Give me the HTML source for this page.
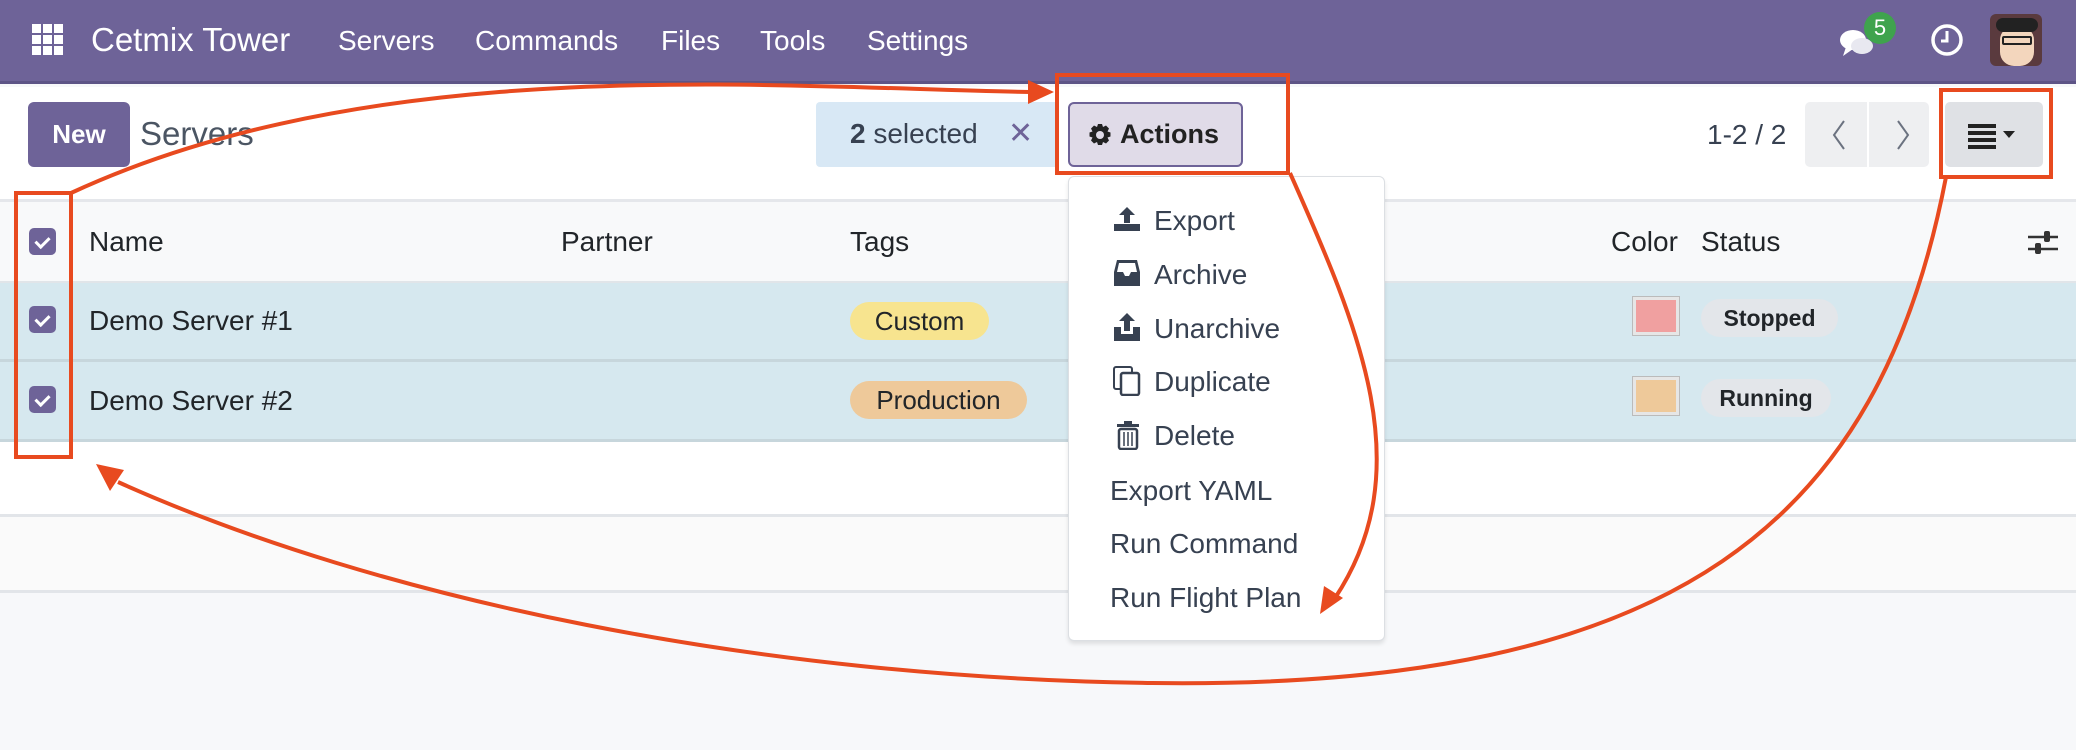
<!DOCTYPE html>
<html><head><meta charset="utf-8"><style>
*{box-sizing:border-box;margin:0;padding:0}
body{width:2076px;height:750px;overflow:hidden;background:#f7f8fa;font-family:"Liberation Sans",sans-serif;position:relative;color:#212529}
.abs{position:absolute}
.nav{left:0;top:0;width:2076px;height:84px;background:#6e6398;border-bottom:3px solid #5d5486}
.nav span{position:absolute;color:#fff;font-size:28px;top:25px}
.t{font-size:28px;position:absolute;white-space:nowrap}
.row{left:0;width:2076px;position:absolute}
.cb{position:absolute;left:29px;width:27px;height:27px;border-radius:5px;background:#6e6398}
.cb:after{content:"";position:absolute;left:9px;top:6px;width:6px;height:11px;border:solid #fff;border-width:0 3px 3px 0;transform:rotate(45deg)}
.pill{position:absolute;border-radius:19px;font-size:26px;text-align:center;line-height:38px;height:38px}
.mi{position:absolute;left:1154px;font-size:28px;color:#374151}
</style></head><body>
<div class="abs nav">
 <svg class="abs" style="left:32px;top:24px" width="32" height="32"><g fill="#fff"><rect x="0" y="0" width="9" height="9"/><rect x="11" y="0" width="9" height="9"/><rect x="22" y="0" width="9" height="9"/><rect x="0" y="11" width="9" height="9"/><rect x="11" y="11" width="9" height="9"/><rect x="22" y="11" width="9" height="9"/><rect x="0" y="22" width="9" height="9"/><rect x="11" y="22" width="9" height="9"/><rect x="22" y="22" width="9" height="9"/></g></svg>
 <span style="left:91px;font-size:33px;top:21px">Cetmix Tower</span>
 <span style="left:338px">Servers</span><span style="left:475px">Commands</span><span style="left:661px">Files</span><span style="left:760px">Tools</span><span style="left:867px">Settings</span>
 <svg class="abs" style="left:1838px;top:26px" width="40" height="36"><ellipse cx="15" cy="14" rx="13" ry="10" fill="#fff"/><path d="M8 21 L5 30 L15 23Z" fill="#fff"/><ellipse cx="24" cy="20" rx="11" ry="8" fill="#e8e8f0"/></svg>
 <div class="abs" style="left:1864px;top:12px;width:32px;height:32px;border-radius:16px;background:#3fa34d;color:#fff;font-size:22px;text-align:center;line-height:32px">5</div>
 <svg class="abs" style="left:1930px;top:22px" width="34" height="36"><circle cx="17" cy="18" r="14" fill="none" stroke="#fff" stroke-width="3.5"/><path d="M17 9 V19 H11" fill="none" stroke="#fff" stroke-width="3"/></svg>
 <div class="abs" style="left:1990px;top:14px;width:52px;height:52px;border-radius:6px;background:#5a3a3e;overflow:hidden"><div style="position:absolute;left:10px;top:12px;width:34px;height:40px;border-radius:14px;background:#f3d6bd"></div><div style="position:absolute;left:6px;top:4px;width:42px;height:14px;border-radius:8px;background:#222"></div><div style="position:absolute;left:12px;top:22px;width:30px;height:9px;border:2px solid #222;border-radius:2px"></div></div>
</div>
<div class="abs" style="left:0;top:87px;width:2076px;height:114px;background:#fff"></div>
<div class="abs" style="left:28px;top:102px;width:102px;height:65px;border-radius:6px;background:#6e6398;color:#fff;font-size:26px;text-align:center;line-height:65px;font-weight:bold">New</div>
<div class="t" style="left:140px;top:115px;font-size:33px;color:#4b5563">Servers</div>
<div class="abs" style="left:816px;top:102px;width:243px;height:65px;background:#d8e8f5;border-radius:4px"></div>
<div class="t" style="left:850px;top:118px;color:#374151"><b>2</b> selected</div>
<div class="t" style="left:1008px;top:116px;color:#6e6398;font-size:30px">✕</div>
<div class="abs" style="left:1068px;top:102px;width:175px;height:65px;background:#e0dbe8;border:2px solid #6e6398;border-radius:6px"></div>
<svg class="abs" style="left:1088px;top:123px" width="24" height="24" viewBox="0 0 24 24"><path fill="#222" d="M10 1h4l1 3 3-1.5 3 3-1.5 3 3 1v4l-3 1 1.5 3-3 3-3-1.5-1 3h-4l-1-3-3 1.5-3-3 1.5-3-3-1v-4l3-1-1.5-3 3-3 3 1.5z"/><circle cx="12" cy="12" r="4" fill="#e0dbe8"/></svg>
<div class="t" style="left:1120px;top:119px;color:#222;font-weight:bold;font-size:27px">Actions</div>
<div class="t" style="left:1707px;top:119px;color:#374151">1-2 / 2</div>
<div class="abs" style="left:1805px;top:102px;width:124px;height:65px;background:#eeeff1;border-radius:5px"></div>
<div class="abs" style="left:1867px;top:102px;width:2px;height:65px;background:#fff"></div>
<svg class="abs" style="left:1826px;top:118px" width="90" height="34"><path d="M18 3 L8 17 L18 31 M72 3 L82 17 L72 31" fill="none" stroke="#6b7280" stroke-width="2"/></svg>
<div class="abs" style="left:1945px;top:102px;width:98px;height:65px;background:#dfe1e5;border-radius:5px"></div>
<svg class="abs" style="left:1968px;top:122px" width="50" height="28"><g fill="#222"><rect x="0" y="2" width="28" height="4"/><rect x="0" y="9" width="28" height="4"/><rect x="0" y="16" width="28" height="4"/><rect x="0" y="23" width="28" height="4"/><path d="M35 9h12l-6 7z"/></g></svg>
<!-- table -->
<div class="row" style="top:199px;height:84px;background:#f8f9fa;border-top:3px solid #e5e7eb;border-bottom:2px solid #e1e5e9"></div>
<div class="row" style="top:283px;height:79px;background:#d6e8ef;border-bottom:3px solid #c7d6dc"></div>
<div class="row" style="top:362px;height:80px;background:#d6e8ef;border-bottom:3px solid #c7d6dc"></div>
<div class="row" style="top:442px;height:75px;background:#fff;border-bottom:3px solid #e2e5e9"></div>
<div class="row" style="top:517px;height:76px;background:#fafafa;border-bottom:3px solid #e2e5e9"></div>
<div class="cb" style="top:228px"></div><div class="cb" style="top:306px"></div><div class="cb" style="top:386px"></div>
<div class="t" style="left:89px;top:226px">Name</div>
<div class="t" style="left:561px;top:226px">Partner</div>
<div class="t" style="left:850px;top:226px">Tags</div>
<div class="t" style="left:1611px;top:226px">Color</div>
<div class="t" style="left:1701px;top:226px">Status</div>
<svg class="abs" style="left:2028px;top:228px" width="30" height="30"><g stroke="#333" stroke-width="2.5"><path d="M0 9H30M0 21H30"/></g><rect x="16" y="3" width="6" height="11" rx="2" fill="#333"/><rect x="7" y="15" width="6" height="11" rx="2" fill="#333"/></svg>
<div class="t" style="left:89px;top:305px">Demo Server #1</div>
<div class="t" style="left:89px;top:385px">Demo Server #2</div>
<div class="pill" style="left:850px;top:302px;width:139px;background:#f7e48f">Custom</div>
<div class="pill" style="left:850px;top:381px;width:177px;background:#eec99a">Production</div>
<div class="abs" style="left:1633px;top:297px;width:46px;height:38px;background:#f0a0a0;border:3px solid #e6e6e6;outline:1px solid #bbb"></div>
<div class="abs" style="left:1633px;top:377px;width:46px;height:38px;background:#eec99a;border:3px solid #e6e6e6;outline:1px solid #bbb"></div>
<div class="pill" style="left:1701px;top:299px;width:137px;background:#e3e6ea;font-weight:bold;font-size:23px">Stopped</div>
<div class="pill" style="left:1701px;top:379px;width:130px;background:#e3e6ea;font-weight:bold;font-size:23px">Running</div>
<!-- dropdown -->
<div class="abs" style="left:1068px;top:176px;width:317px;height:465px;background:#fff;border:1px solid #dcdfe3;border-radius:6px;box-shadow:0 3px 4px rgba(0,0,0,.1)"></div>
<svg class="abs" style="left:1113px;top:206px" width="28" height="26"><path d="M14 1 L6 9 H11 V17 H17 V9 H22Z" fill="#374151"/><rect x="1" y="18" width="26" height="7" fill="#374151"/></svg>
<div class="mi" style="top:205px">Export</div>
<svg class="abs" style="left:1113px;top:259px" width="28" height="28"><path d="M4 1H24L27 13V27H1V13Z" fill="#374151"/><path d="M6 4H22L24 13H18L16 17H12L10 13H4Z" fill="#fff"/></svg>
<div class="mi" style="top:259px">Archive</div>
<svg class="abs" style="left:1113px;top:313px" width="28" height="28"><path d="M14 0 L6 8 H11 V18 H17 V8 H22Z" fill="#374151"/><path d="M1 14H8V21H20V14H27V28H1Z" fill="#374151"/></svg>
<div class="mi" style="top:313px">Unarchive</div>
<svg class="abs" style="left:1113px;top:366px" width="28" height="30"><rect x="1" y="1" width="18" height="22" rx="2" fill="none" stroke="#374151" stroke-width="2"/><rect x="8" y="7" width="18" height="22" rx="2" fill="#fff" stroke="#374151" stroke-width="2.5"/></svg>
<div class="mi" style="top:366px">Duplicate</div>
<svg class="abs" style="left:1116px;top:420px" width="24" height="30"><path d="M8 1H16V4H23V7H1V4H8Z" fill="#374151"/><rect x="3" y="9" width="18" height="20" rx="2" fill="none" stroke="#374151" stroke-width="2.5"/><path d="M8 12V26M12 12V26M16 12V26" stroke="#374151" stroke-width="1.5"/></svg>
<div class="mi" style="top:420px">Delete</div>
<div class="mi" style="left:1110px;top:475px">Export YAML</div>
<div class="mi" style="left:1110px;top:528px">Run Command</div>
<div class="mi" style="left:1110px;top:582px">Run Flight Plan</div>
<!-- annotations -->
<svg class="abs" style="left:0;top:0" width="2076" height="750">
<g fill="none" stroke="#e84a1f" stroke-width="4">
<rect x="1057" y="75" width="231" height="98"/>
<rect x="1941" y="90" width="110" height="87"/>
<rect x="16" y="193" width="55" height="264"/>
<path d="M71 193 C 380 50 780 88 1030 92"/>
<path d="M1290 173 C 1360 330 1420 470 1335 598"/>
<path d="M1946 177 C 1880 520 1680 690 1152 683 C 760 678 380 600 118 482"/>
</g>
<g fill="#e84a1f">
<path d="M1054 92 L1028 80 L1028 104Z"/>
<path d="M1320 614 L1324 586 L1343 598Z"/>
<path d="M96 464 L124 470 L110 491Z"/>
</g>
</svg>
</body></html>
